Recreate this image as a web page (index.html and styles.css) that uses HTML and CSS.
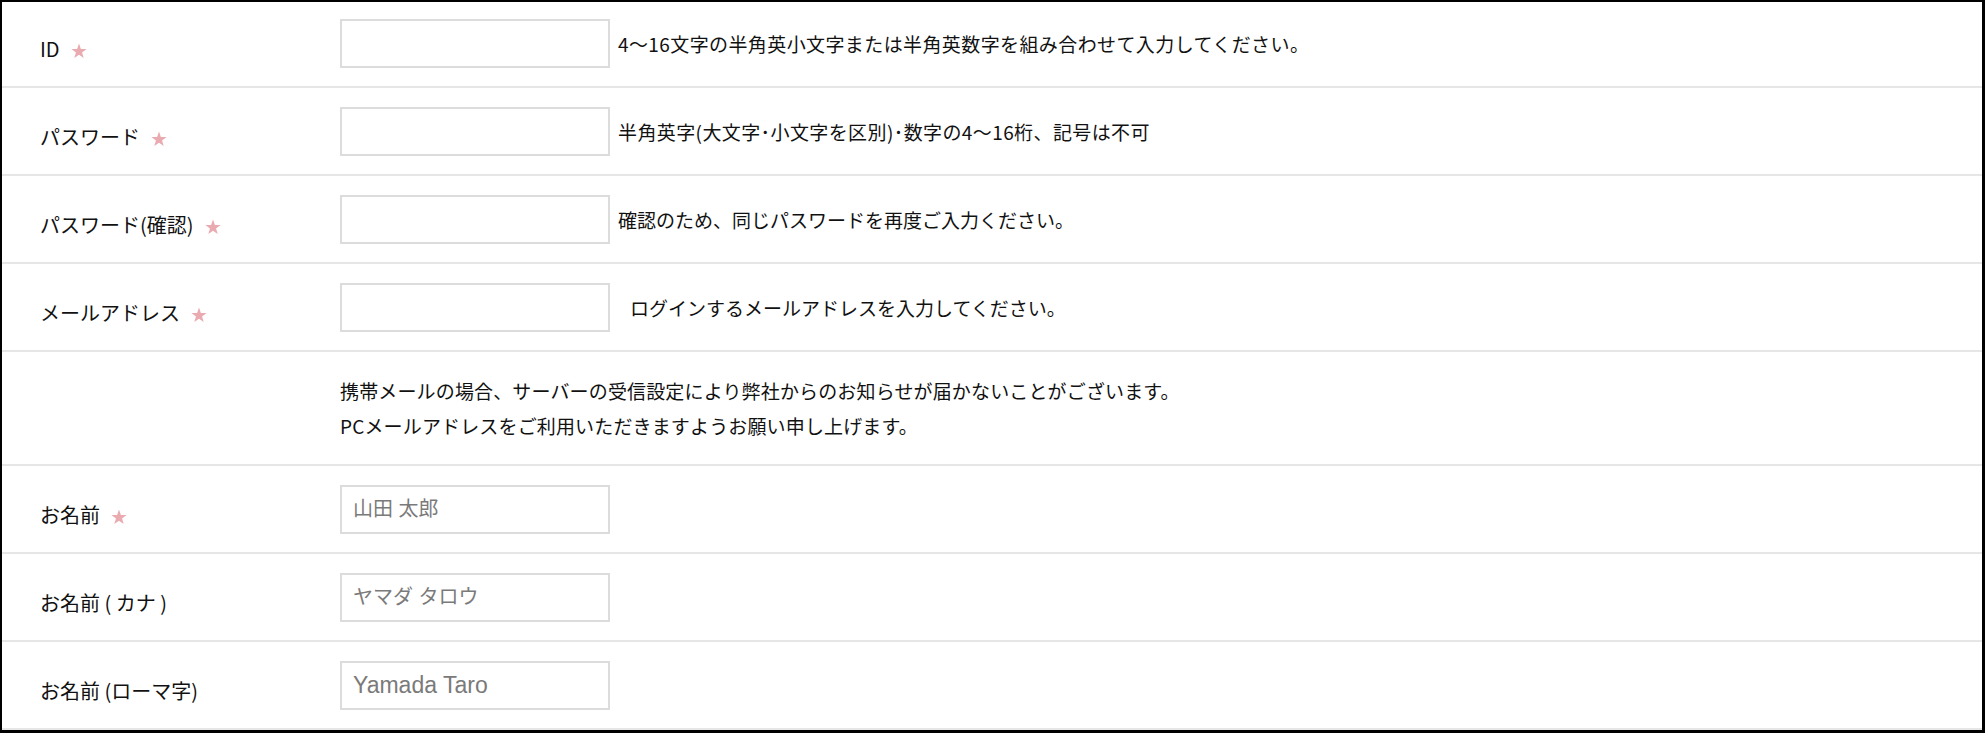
FILE: index.html
```html
<!DOCTYPE html>
<html lang="ja">
<head>
    <meta charset="UTF-8">
    <meta name="viewport" content="width=device-width, initial-scale=1.0">
    <title>会員登録</title>
    <link rel="stylesheet" href="styles.css">
</head>
<body>
    <form class="regist">
        <div class="row">
            <label class="label" for="userId">ID
                <svg class="req" viewBox="0 0 14 14"><polygon points="7,0.5 8.65,5.23 13.66,5.34 9.66,8.37 11.11,13.16 7,10.3 2.89,13.16 4.34,8.37 0.34,5.34 5.35,5.23"/></svg>
            </label>
            <div class="field">
                <input type="text" id="userId" class="text">
                <span class="hint hint-num">4～16文字の半角英小文字または半角英数字を組み合わせて入力してください。</span>
            </div>
        </div>

        <div class="row">
            <label class="label" for="pass">パスワード
                <svg class="req" viewBox="0 0 14 14"><polygon points="7,0.5 8.65,5.23 13.66,5.34 9.66,8.37 11.11,13.16 7,10.3 2.89,13.16 4.34,8.37 0.34,5.34 5.35,5.23"/></svg>
            </label>
            <div class="field">
                <input type="password" id="pass" class="text">
                <span class="hint hint-num">半角英字(大文字･小文字を区別)･数字の4～16桁、記号は不可</span>
            </div>
        </div>

        <div class="row">
            <label class="label" for="passConfirm">パスワード(確認)
                <svg class="req" viewBox="0 0 14 14"><polygon points="7,0.5 8.65,5.23 13.66,5.34 9.66,8.37 11.11,13.16 7,10.3 2.89,13.16 4.34,8.37 0.34,5.34 5.35,5.23"/></svg>
            </label>
            <div class="field">
                <input type="password" id="passConfirm" class="text">
                <span class="hint">確認のため、同じパスワードを再度ご入力ください。</span>
            </div>
        </div>

        <div class="row">
            <label class="label" for="mail">メールアドレス
                <svg class="req" viewBox="0 0 14 14"><polygon points="7,0.5 8.65,5.23 13.66,5.34 9.66,8.37 11.11,13.16 7,10.3 2.89,13.16 4.34,8.37 0.34,5.34 5.35,5.23"/></svg>
            </label>
            <div class="field">
                <input type="email" id="mail" class="text">
                <span class="hint hint-indent">ログインするメールアドレスを入力してください。</span>
            </div>
        </div>

        <!-- 携帯メールの注意書き -->
        <div class="row note">
            <div class="label"></div>
            <p class="note-text">携帯メールの場合、サーバーの受信設定により弊社からのお知らせが届かないことがございます。<br>PCメールアドレスをご利用いただきますようお願い申し上げます。</p>
        </div>

        <div class="row">
            <label class="label" for="name">お名前
                <svg class="req" viewBox="0 0 14 14"><polygon points="7,0.5 8.65,5.23 13.66,5.34 9.66,8.37 11.11,13.16 7,10.3 2.89,13.16 4.34,8.37 0.34,5.34 5.35,5.23"/></svg>
            </label>
            <div class="field">
                <input type="text" id="name" class="text" placeholder="山田 太郎">
            </div>
        </div>

        <div class="row">
            <label class="label" for="kana">お名前 ( カナ )</label>
            <div class="field">
                <input type="text" id="kana" class="text" placeholder="ヤマダ タロウ">
            </div>
        </div>

        <div class="row">
            <label class="label" for="roman">お名前 (ローマ字)</label>
            <div class="field">
                <input type="text" id="roman" class="text text-roman" placeholder="Yamada Taro">
            </div>
        </div>
    </form>
</body>
</html>
```

FILE: styles.css
```css
body {
    margin: 0;
    background-color: #fff;
    font-family: "Noto Sans CJK JP", sans-serif;
    color: #111;
}

.regist {
    border: 2px solid #000;
    border-right-width: 3px;
    border-bottom-width: 3px;
    background-color: #fff;
}

.row {
    display: grid;
    grid-template-columns: 300px 1fr;
    align-items: center;
    padding: 19px 0 18px 38px;
    border-bottom: 2px solid #e6e6e6;
}
.row:first-child {
    padding-top: 17px;
}

.label {
    display: flex;
    align-items: center;
    gap: 11px;
    padding-top: 10px;
    font-size: 20px;
    color: #111;
}
.req {
    width: 16px;
    height: 16px;
    margin-top: 4px;
    fill: #e9abb0; /* pink required mark */
}

.field {
    display: flex;
    align-items: center;
    gap: 8px;
}

.text {
    box-sizing: border-box;
    width: 270px;
    height: 49px;
    margin: 0;
    padding: 0 11px;
    border: 2px solid #dcdcdc;
    border-radius: 0;
    font-family: "Liberation Sans", "Noto Sans CJK JP", sans-serif;
    font-size: 20px;
    color: #333;
    background-color: #fff;
}
.text-roman {
    font-size: 23px;
}
.text::placeholder {
    color: #7a7a7a;
}

.hint {
    font-size: 19px;
    color: #111;
}
.hint-num {
    letter-spacing: 0.4px; /* digits run wider in the original font */
}
.hint-indent {
    padding-left: 12px;
}

.note {
    padding-top: 21px;
    padding-bottom: 21px;
}
.note-text {
    margin: 0;
    font-size: 19px;
    letter-spacing: 0.15px;
    line-height: 35px;
}
```
